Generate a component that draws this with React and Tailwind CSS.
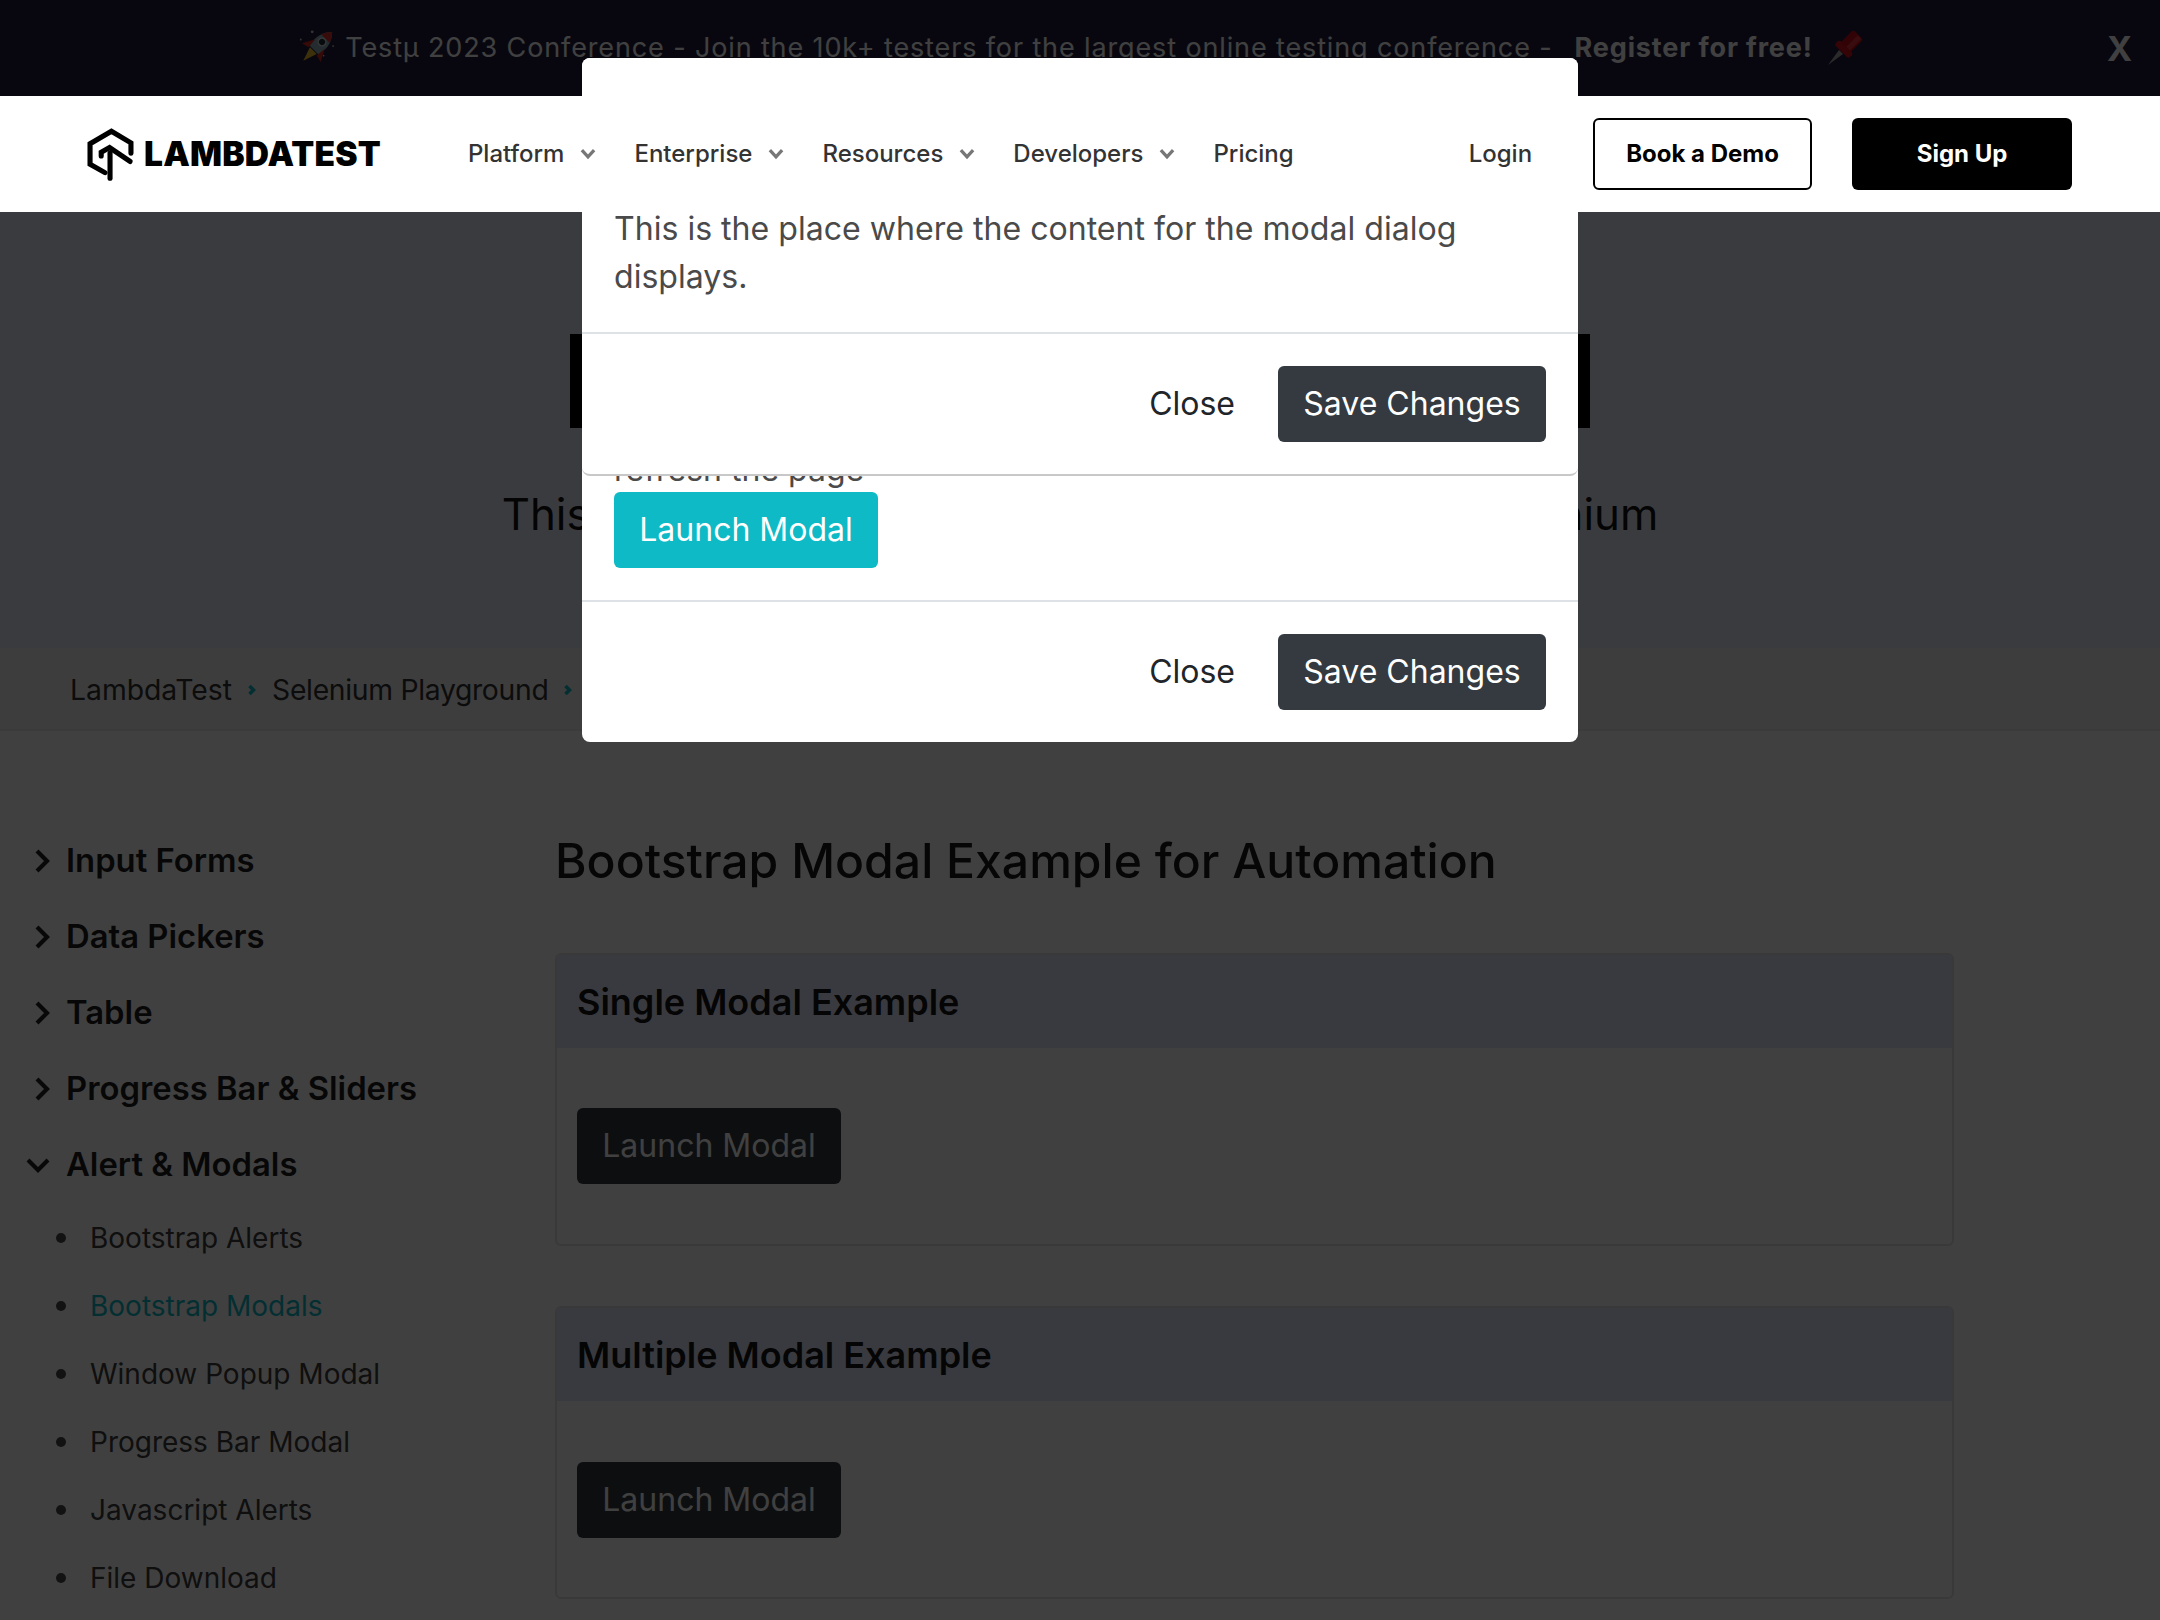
import React from "react";

const font = { fontFamily: "Inter, sans-serif" };

const LogoMark = () => (
  <svg width="47" height="53" viewBox="6 4 50 57" fill="none" stroke="#000" strokeWidth="5.500" strokeLinecap="round" strokeLinejoin="miter">
    <path d="M53 31V20L32 7.500 9 21v22l16 9" />
    <path d="M21 34v-4l9-5 22 15" />
    <path d="M30.500 31v27" />
  </svg>
);

const Rocket = () => (
  <svg width="38" height="38" viewBox="0 0 40 40">
    <circle cx="16" cy="3" r="1.500" fill="#ccc" />
    <circle cx="4" cy="11" r="1" fill="#ccc" />
    <circle cx="28" cy="28" r="1" fill="#ccc" />
    <circle cx="38" cy="18" r="1" fill="#ccc" />
    <g transform="rotate(45 20 20)">
      <path d="M20 -4c7 7 9 15 7 27H13C11 11 13 3 20 -4z" fill="#8fb0bd" />
      <path d="M20 -4c3 3 5 6 6 10H14c1-4 3-7 6-10z" fill="#e0312a" />
      <circle cx="20" cy="11" r="4" fill="#1d2f3a" stroke="#d5dde2" strokeWidth="1.500" />
      <path d="M13 14l-7 13 8-2zM27 14l7 13-8-2z" fill="#d1281f" />
      <path d="M15 24h10l-5 15z" fill="#f4c430" />
    </g>
  </svg>
);

const Pin = () => (
  <svg width="36" height="36" viewBox="0 0 36 36">
    <path d="M1 35l11-15 4 4z" fill="#aaa" />
    <g transform="rotate(45 20 16)">
      <rect x="10" y="17" width="20" height="7" rx="3" fill="#d3121c" />
      <path d="M13 18V3a3 3 0 0 1 3-3h8a3 3 0 0 1 3 3v15z" fill="#c40f18" />
      <rect x="20" y="1" width="5" height="16" fill="#e2363e" />
    </g>
  </svg>
);

const Caret = () => (
  <svg width="16" height="12" viewBox="0 0 17 12" fill="none" stroke="#777" strokeWidth="3.500" className="ml-[16px]">
    <path d="M2 2l6.500 7L15 2" />
  </svg>
);

const Crumb = () => (
  <svg width="8" height="12" viewBox="0 0 8 12" fill="none" stroke="#0ebac5" strokeWidth="3.500" className="mx-[16px]">
    <path d="M1.500 2l4 4-4 4" />
  </svg>
);

const SideHead = ({ label, open }) => (
  <div className="h-[76px] flex items-center relative pl-[66px] text-[32.800px] font-semibold text-[#1f1f1f]">
    {open ? (
      <svg width="24" height="16" viewBox="0 0 24 16" fill="none" stroke="#222" strokeWidth="4.200" className="absolute left-[26px]">
        <path d="M2 3l10 10L22 3" />
      </svg>
    ) : (
      <svg width="15" height="24" viewBox="0 0 15 24" fill="none" stroke="#222" strokeWidth="4.200" className="absolute left-[35px]">
        <path d="M2 2l10 10L2 22" />
      </svg>
    )}
    {label}
  </div>
);

const SideLink = ({ label, active }) => (
  <li className="h-[68px] flex items-center pl-[90px] relative">
    <span className="absolute left-[56px] w-[10px] h-[10px] rounded-full bg-[#4a4a4a]" />
    <span className={active ? "text-[#0ebac5]" : "text-[#3c3c3c]"}>{label}</span>
  </li>
);

const DemoCard = ({ title, className, bodyClass }) => (
  <div className={"h-[293px] border-2 border-[#e4e4e4] rounded-[6px] overflow-hidden " + className}>
    <div className="h-[93px] bg-[#e4e6fa] flex items-center px-[20px] text-[36px] font-semibold text-[#151515]">
      {title}
    </div>
    <div className={"px-[20px] " + bodyClass}>
      <button className="h-[76px] w-[264px] bg-[#343a40] text-white text-[32px] rounded-[6px]">Launch Modal</button>
    </div>
  </div>
);

const ModalFooter = () => (
  <div className="h-[142px] border-t-2 border-[#dee2e6] flex items-center justify-end px-[32px]">
    <button className="text-[32px] text-[#212529] mr-[43px]">Close</button>
    <button className="h-[76px] w-[268px] bg-[#343a40] text-white text-[32px] rounded-[6px]">Save Changes</button>
  </div>
);

export default function App() {
  return (
    <div style={font} className="relative w-full h-[1620px] overflow-hidden bg-white">
      <div className="h-[96px] bg-[#201c3c] relative flex items-center justify-center text-white text-[27px] tracking-[0.870px]">
        <Rocket />
        <span className="ml-[10px]">Testμ 2023 Conference - Join the 10k+ testers for the largest online testing conference -</span>
        <span className="ml-[22px] font-bold">Register for free!</span>
        <span className="ml-[14px]"><Pin /></span>
        <span className="absolute left-[2107px] font-bold text-[34px]">X</span>
      </div>

      <nav className="relative z-30 h-[116px] bg-white flex items-center pl-[87px] text-[24px] font-medium text-[#333]">
        <LogoMark />
        <span className="ml-[10px] text-[33.500px] font-black text-black tracking-[0.200px]">LAMBDATEST</span>
        <a className="ml-[87px]">Platform</a><Caret />
        <a className="ml-[38px]">Enterprise</a><Caret />
        <a className="ml-[38px]">Resources</a><Caret />
        <a className="ml-[38px]">Developers</a><Caret />
        <a className="ml-[38px]">Pricing</a>
        <a className="ml-[175px]">Login</a>
        <button className="ml-[61px] w-[219px] h-[72px] border-2 border-black rounded-[6px] font-bold text-black">Book a Demo</button>
        <button className="ml-[40px] w-[220px] h-[72px] bg-black rounded-[6px] font-bold text-white">Sign Up</button>
      </nav>

      <div className="h-[436px] bg-[#e8ebfc] flex flex-col items-center">
        <div className="mt-[122px] w-[1020px] h-[94px] bg-black" />
        <p className="mt-[60px] text-[43.800px] leading-[54px] text-[#111] whitespace-nowrap">This is your first step towards automating with Selenium</p>
      </div>

      <div className="h-[83px] pt-[3px] bg-[#f2f2f2] border-b-2 border-[#ececec] flex items-center pl-[70px] text-[28.300px] text-[#333]">
        LambdaTest<Crumb /><span className="tracking-[-0.300px]">Selenium Playground</span><Crumb />
      </div>

      <div className="flex">
        <aside className="w-[555px] pt-[92px] shrink-0">
          <SideHead label="Input Forms" />
          <SideHead label="Data Pickers" />
          <SideHead label="Table" />
          <SideHead label="Progress Bar & Sliders" />
          <SideHead label="Alert & Modals" open />
          <ul className="text-[28px] pt-[1px]">
            <SideLink label="Bootstrap Alerts" />
            <SideLink label="Bootstrap Modals" active />
            <SideLink label="Window Popup Modal" />
            <SideLink label="Progress Bar Modal" />
            <SideLink label="Javascript Alerts" />
            <SideLink label="File Download" />
          </ul>
        </aside>
        <main className="w-[1399px] pt-[97px]">
          <h1 className="text-[48.100px] leading-[66px] font-medium text-[#1a1a1a]">Bootstrap Modal Example for Automation</h1>
          <DemoCard title="Single Modal Example" className="mt-[59px]" bodyClass="pt-[60px]" />
          <DemoCard title="Multiple Modal Example" className="mt-[60px]" bodyClass="pt-[61px]" />
        </main>
      </div>

      <div className="absolute inset-0 z-10 bg-black/75" />

      <div className="absolute z-20 left-[582px] top-[58px] w-[996px] h-[684px] bg-white rounded-[8px] flex flex-col justify-end">
        <div className="px-[32px] pb-[32px]">
          <p className="text-[32px] leading-[47px] text-[#4a4a4a] mb-[-1px]">refresh the page</p>
          <button className="h-[76px] w-[264px] bg-[#0ebac5] text-white text-[32px] rounded-[6px]">Launch Modal</button>
        </div>
        <ModalFooter />
      </div>

      <div className="absolute z-20 left-[582px] top-[58px] w-[996px] h-[418px] bg-white rounded-[8px] border-b-2 border-[#c8c8c8] flex flex-col">
        <div className="h-[115px]" />
        <p className="flex-1 px-[32px] pt-[32px] text-[32.100px] leading-[47.500px] text-[#4a4a4a]">
          This is the place where the content for the modal dialog displays.
        </p>
        <ModalFooter />
      </div>
    </div>
  );
}
